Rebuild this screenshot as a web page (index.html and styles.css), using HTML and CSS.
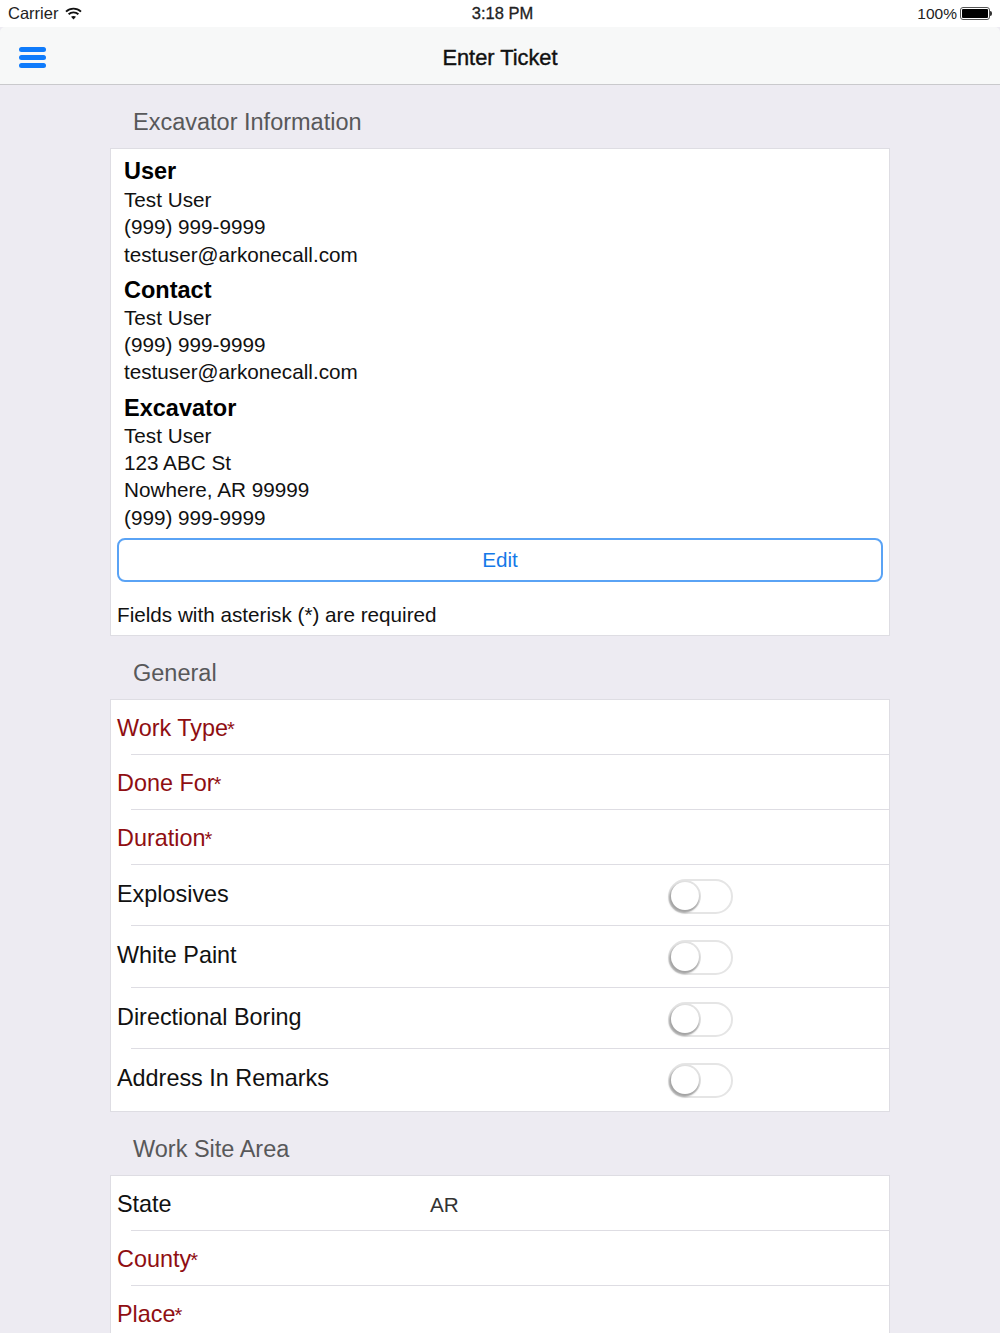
FILE: index.html
```html
<!DOCTYPE html>
<html lang="en">
<head>
    <meta charset="UTF-8">
    <meta name="viewport" content="width=device-width, initial-scale=1.0">
    <title>Enter Ticket</title>
    <link rel="stylesheet" href="styles.css">
</head>

<body>

    <!-- Status Bar -->
    <div class="status-bar">
        <div class="status-left">
            <span class="carrier">Carrier</span>
            <svg class="wifi" width="17" height="13" viewBox="0 0 17 13">
                <path d="M1 4.600C5.300.6 11.700.6 16 4.600" fill="none" stroke="#111" stroke-width="1.900"/>
                <path d="M3.600 7.300C6.400 4.700 10.600 4.700 13.400 7.300" fill="none" stroke="#111" stroke-width="1.900"/>
                <path d="M6 9.800C7.500 8.600 9.500 8.600 11 9.800L8.500 12.500Z" fill="#111"/>
            </svg>
        </div>
        <div class="status-time">3:18 PM</div>
        <div class="status-right">
            <span>100%</span>
            <div class="battery"><div class="battery-fill"></div></div>
            <div class="battery-tip"></div>
        </div>
    </div>

    <!-- Nav Bar -->
    <div class="nav-bar">
        <div class="menu-icon"><span></span><span></span><span></span></div>
        <div class="nav-title">Enter Ticket</div>
    </div>

    <div class="content">
        <h2 class="section-title">Excavator Information</h2>
        <div class="card info-card">
            <div class="info-block">
                <div class="info-name">User</div>
                <div class="info-line">Test User</div>
                <div class="info-line">(999) 999-9999</div>
                <div class="info-line">testuser@arkonecall.com</div>
            </div>
            <div class="info-block">
                <div class="info-name">Contact</div>
                <div class="info-line">Test User</div>
                <div class="info-line">(999) 999-9999</div>
                <div class="info-line">testuser@arkonecall.com</div>
            </div>
            <div class="info-block">
                <div class="info-name">Excavator</div>
                <div class="info-line">Test User</div>
                <div class="info-line">123 ABC St</div>
                <div class="info-line">Nowhere, AR 99999</div>
                <div class="info-line">(999) 999-9999</div>
            </div>
            <button class="edit-button" type="button">Edit</button>
            <p class="required-note">Fields with asterisk (*) are required</p>
        </div>

        <h2 class="section-title">General</h2>
        <div class="card">
            <div class="row required">Work Type<sup>*</sup></div>
            <div class="row required">Done For<sup>*</sup></div>
            <div class="row required">Duration<sup>*</sup></div>
            <div class="row toggle-row">Explosives<span class="switch"></span></div>
            <div class="row toggle-row">White Paint<span class="switch"></span></div>
            <div class="row toggle-row">Directional Boring<span class="switch"></span></div>
            <div class="row toggle-row">Address In Remarks<span class="switch"></span></div>
        </div>

        <h2 class="section-title">Work Site Area</h2>
        <div class="card">
            <div class="row"><span class="row-label">State</span><span class="row-value">AR</span></div>
            <div class="row required">County<sup>*</sup></div>
            <div class="row required">Place<sup>*</sup></div>
        </div>
    </div>

</body>
</html>
```

FILE: styles.css
```css
/* Global Styles */
* {
    margin: 0;
    padding: 0;
    box-sizing: border-box;
}

html, body {
    height: 1333px;
    overflow: hidden;
}

body {
    font-family: 'Liberation Sans', Arial, sans-serif;
    background-color: #EDEBF2;
    color: #111;
}

/* Status Bar */
.status-bar {
    height: 27px;
    background: #fff;
    display: flex;
    align-items: center;
    justify-content: space-between;
    padding: 0 8px;
    font-size: 15.500px;
    color: #222;
    position: relative;
}

.status-left {
    display: flex;
    align-items: center;
    gap: 7px;
}

.carrier {
    font-size: 16.500px;
}

.status-time {
    position: absolute;
    left: 5px;
    right: 0;
    text-align: center;
    font-size: 16.500px;
    -webkit-text-stroke: 0.3px #222;
}

.status-right {
    display: flex;
    align-items: center;
    gap: 3px;
}

.battery {
    width: 30px;
    height: 13px;
    border: 1px solid #555;
    border-radius: 3px;
    padding: 1px;
}

.battery-fill {
    height: 100%;
    background: #000;
    border-radius: 1px;
}

.battery-tip {
    width: 2px;
    height: 5px;
    margin-left: -3px;
    background: #333;
    border-radius: 0 2px 2px 0;
}

/* Nav Bar */
.nav-bar {
    height: 58px;
    background: #F7F8F8;
    border-bottom: 1px solid #C9C9CC;
    border-radius: 5px 5px 0 0;
    display: flex;
    align-items: center;
    justify-content: center;
    position: relative;
}

.nav-title {
    font-size: 21.800px;
    -webkit-text-stroke: 0.4px #111;
    margin-top: 4px;
}

.menu-icon {
    position: absolute;
    left: 19px;
    top: 20px;
    width: 27px;
    display: flex;
    flex-direction: column;
    gap: 3px;
}

.menu-icon span {
    height: 5px;
    background: #0F7BFB;
    border-radius: 3px;
}

/* Sections */
.content {
    width: 780px;
    margin: 0 auto;
}

.section-title {
    font-size: 23.500px;
    font-weight: normal;
    color: #58585A;
    height: 63px;
    line-height: 74px;
    padding-left: 23px;
}

.card {
    background: #fff;
    border: 1px solid #DEDDE3;
}

/* Excavator info */
.info-card {
    padding: 8px 6px 7px;
}

.info-block {
    padding-left: 7px;
    margin-bottom: 7px;
}

.info-name {
    font-size: 23.500px;
    font-weight: bold;
    line-height: 29px;
    color: #000;
}

.info-block + .info-block .info-name {
    line-height: 31px;
    margin-bottom: -2px;
}

.info-line {
    font-size: 20.700px;
    line-height: 27.300px;
}

.edit-button {
    display: block;
    width: 100%;
    height: 44px;
    background: #fff;
    border: 2px solid #5AA3F5;
    border-radius: 8px;
    color: #1479E8;
    font-family: inherit;
    font-size: 20.700px;
}

.required-note {
    font-size: 20.700px;
    line-height: 27px;
    margin-top: 19px;
}

/* Rows */
.row {
    height: 55px;
    font-size: 23.400px;
    display: flex;
    align-items: center;
    padding: 0 0 0 6px;
    position: relative;
}

/* divider is inset from the left of the card */
.row::after {
    content: "";
    position: absolute;
    left: 20px;
    right: 0;
    bottom: 0;
    height: 1px;
    background: #DEDDE3;
}

.row:last-child::after {
    display: none;
}

.required {
    color: #8F0E12;
    padding-top: 3px;
}

.required sup {
    font-size: 20px;
    line-height: 1;
    align-self: flex-start;
    margin: 16px 0 0 -1px;
}

.toggle-row {
    height: 61.500px;
    padding-bottom: 3px;
}

.switch {
    position: absolute;
    left: 557px;
    top: 14px;
    width: 65px;
    height: 35px;
    border: 2px solid #E5E5E5;
    border-radius: 18px;
    background: #fff;
}

.switch::before {
    content: "";
    position: absolute;
    left: 1px;
    top: 1px;
    width: 28px;
    height: 28px;
    border-radius: 50%;
    background: #fff;
    box-shadow: -1px 2px 2px 1px rgba(0, 0, 0, 0.28), 0 0 0 2px #E3E3E3;
}

.row-label {
    width: 313px;
    padding-top: 3px;
}

.row-value {
    font-size: 20.700px;
    color: #333;
    padding-top: 3px;
}
```
